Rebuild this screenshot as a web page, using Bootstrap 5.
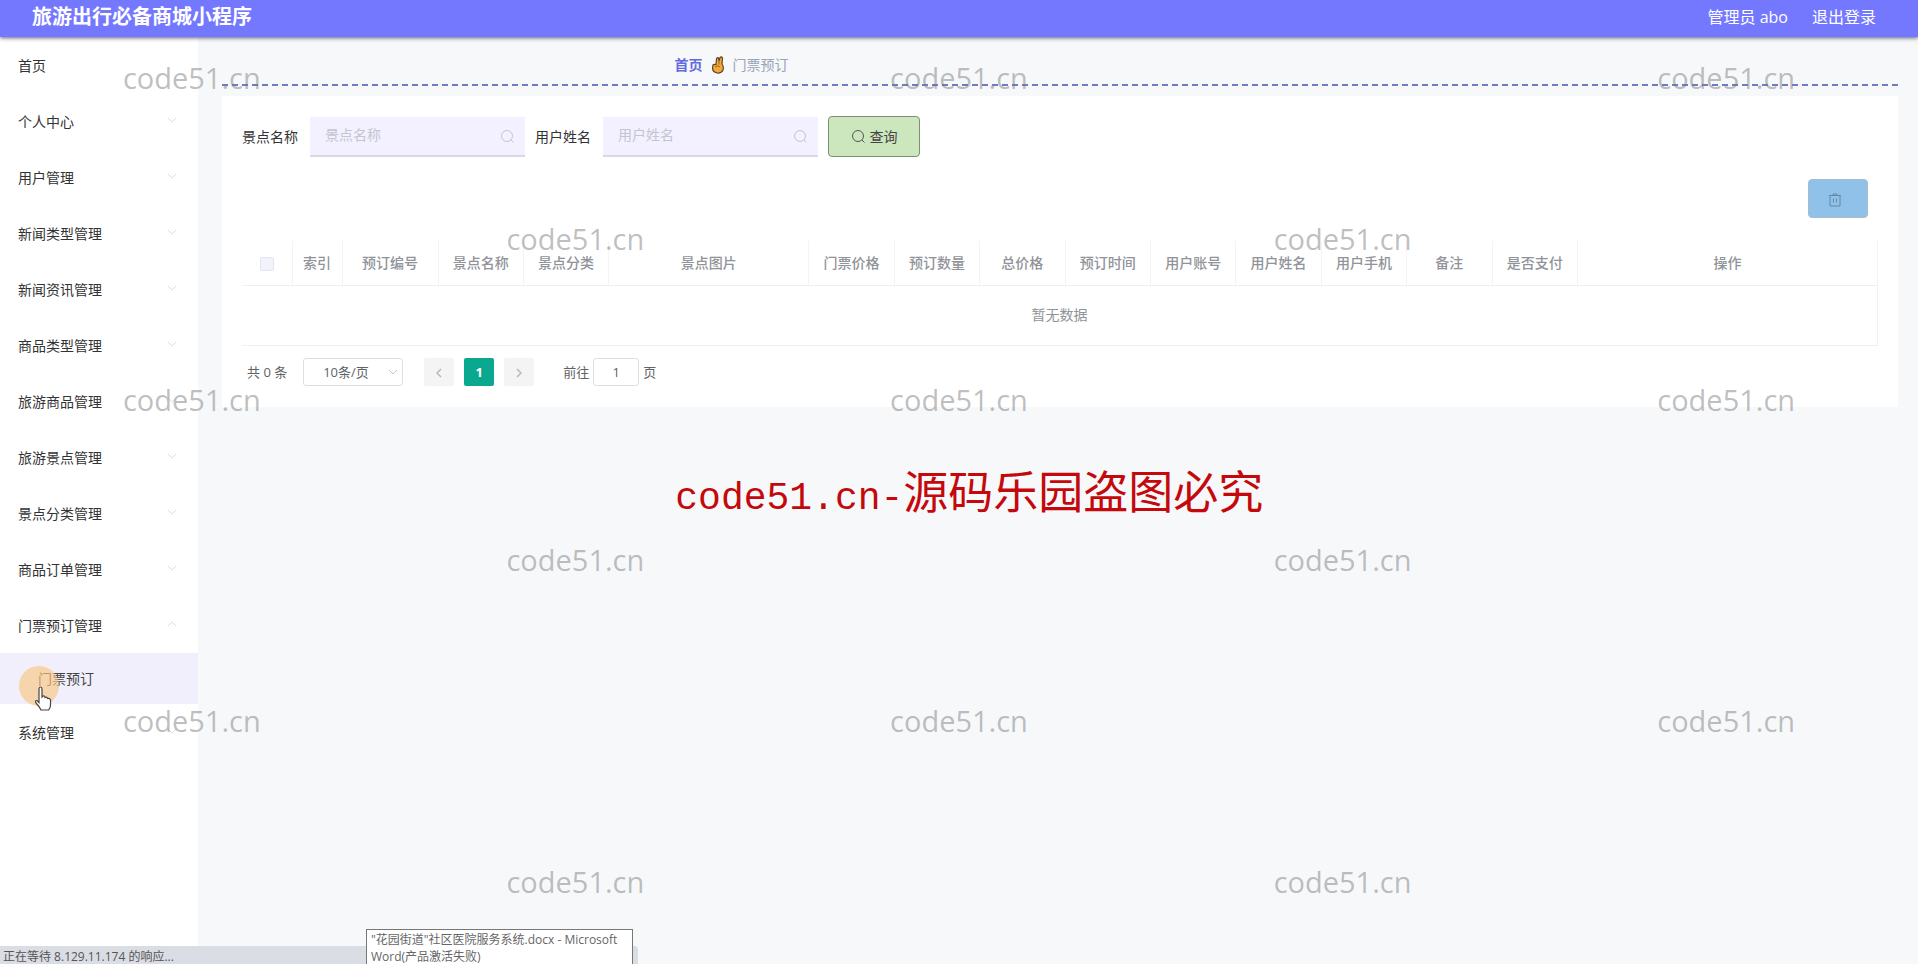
<!DOCTYPE html>
<html lang="zh-CN">
<head>
<meta charset="utf-8">
<meta name="viewport" content="width=device-width, initial-scale=1">
<title>旅游出行必备商城小程序</title>
<link href="https://cdn.jsdelivr.net/npm/bootstrap@5.3.0/dist/css/bootstrap.min.css" rel="stylesheet">
<style>
body{font-family:"Open Sans","Noto Sans CJK SC",sans-serif;font-size:14px;line-height:20px;color:#333;background:#f6f8fa;overflow:hidden}
.shell{min-height:100vh}
.topbar{height:37px;background:#7478ff;box-shadow:0 1px 4px rgba(30,30,60,.7);padding:0 42px 3px 32px;z-index:2;font-size:16px;color:#fff}
.topbar h1{font-size:20px;line-height:28px;font-weight:700}
.topbar a{color:#fff}
.side{width:198px;background:#fff;flex:none}
.side a{color:#333;height:56px;padding:1px 21px 0 18px}
.side a.sub{height:51px;padding-left:38px;background:#f1effb;color:#444}
.side svg{margin-top:-4px}
.content{padding:0 20px 0 24px}
.crumbs{height:49px;padding:7px 0 0 27%;margin-bottom:10px;background:repeating-linear-gradient(90deg,#6f7cc4 0 6px,transparent 6px 10px) left bottom/100% 2px no-repeat;gap:8px;color:#99a3b6}
.crumbs a{color:#6468e0}
.panel{background:#fff;padding:20px}
.search-box{width:215px;margin:0 10px 0 12px}
.search-box input{height:40px;border:0;border-bottom:2px solid #d9d8e4;border-radius:0;background:#f3f1ff;font-size:14px;padding:0 30px 2px 15px}
.search-box input::placeholder{color:#c3c5cf}
.search-box svg{right:10px;top:12px}
.btn-query{width:92px;height:41px;border:1px solid #7c8f74;border-radius:4px;background:#cce6bd;color:#444;font-size:14px;padding:0}
.tools{padding:22px 10px 23px 0}
.btn-del{width:60px;height:39px;border:1px solid #a8bccb;border-radius:4px;background:#8fc1e9;padding:0 6px 0 0}
.btn-del:disabled{opacity:1;background:#8fc1e9;border-color:#a8bccb}
.data{table-layout:fixed;color:#909399;border-right:1px solid #f1f2f4;margin:0}
.data th{height:44px;font-weight:500;text-align:center;vertical-align:middle;padding:0;border-bottom:1px solid #eff0f3;border-right:1px solid #f3f4f6}
.data td{height:60px;text-align:center;vertical-align:middle;padding:0;border-bottom:1px solid #eff0f3}
.data .form-check-input{width:14px;height:14px;margin:0;border:1px solid #e2e6ef;border-radius:2px;background:#f0f3fa;vertical-align:middle}
.w-s{width:50px}.w-no{width:96px}.w-img{width:200px}.w-op{width:300px}
.pager{padding:12px 5px 1px;font-size:13px;color:#606266}
.pager select{width:100px;height:28px;font-size:13px;padding:0 0 0 19px;border:1px solid #dcdfe6;border-radius:3px;color:#606266;background:#fff;appearance:none}
.pages{gap:10px;margin:0 29px 0 5px}
.pager .pg{width:30px;height:28px;border:0;border-radius:2px;background:#f4f4f5;padding:0;color:#b0b4bc;font-size:13px;font-weight:700}
.pager .pg.on{background:#0aa88f;color:#fff}
.pager .go{width:46px;height:28px;border:1px solid #dcdfe6;border-radius:3px;text-align:center;color:#606266;font-size:13px}
.marks{display:grid;grid-template:repeat(6,1fr)/repeat(5,1fr);font-size:29px;line-height:40px;color:rgba(120,120,120,.48);pointer-events:none;z-index:5}
.marks span{display:flex;align-items:center;justify-content:center;margin-top:-4px}
.notice{left:35%;top:464px;color:#c4080c;font-size:45px;line-height:56px;padding-left:4px;pointer-events:none;white-space:nowrap;z-index:6}
.notice span{font-family:"Liberation Mono",monospace;font-size:38px}
.status{left:0;bottom:0;width:638px;height:18px;background:#dadde4;font-size:12px;line-height:22px;padding-left:3px;border-top-right-radius:4px;color:#555;z-index:3}
.tip{left:366px;bottom:0;width:267px;height:35px;background:#fff;border:1px solid #777;border-bottom:0;font-size:12px;line-height:17px;padding:1px 4px;color:#666;z-index:4;white-space:nowrap}
.pointer{left:19px;top:665px;z-index:4;pointer-events:none}
</style>
</head>
<body>
<div class="shell d-flex flex-column position-relative">
<header class="topbar d-flex align-items-center justify-content-between position-relative">
<h1 class="m-0">旅游出行必备商城小程序</h1>
<div class="d-flex gap-4"><span>管理员 abo</span><a href="#" class="text-decoration-none">退出登录</a></div>
</header>
<div class="d-flex flex-grow-1">
<nav class="side" id="side">
<a href="#" class="d-flex align-items-center justify-content-between text-decoration-none">首页</a>
</nav>
<main class="content flex-grow-1">
<div class="crumbs d-flex align-items-center"><a href="#" class="text-decoration-none fw-bold">首页</a>
<svg width="14" height="18" viewBox="0 0 14 18"><path d="M2 9Q3 8 5 8.500L5.500 3Q6 1 7.500 2L8 5 9 1.500Q10.500 0 11.500 2L11 8Q13 11 12 14 10.500 17.500 6 17 1.500 16 1.500 12Z" fill="#f5a83a" stroke="#5f4524" stroke-width="1.200"/><path d="M4 11Q7 8.500 9 11M8 5v3.500" fill="none" stroke="#9a651c"/></svg>
<span>门票预订</span></div>
<section class="panel">
<form class="d-flex align-items-center">
<label for="spot">景点名称</label>
<div class="search-box position-relative"><input id="spot" class="form-control" placeholder="景点名称"><svg class="position-absolute" width="15" height="15" viewBox="0 0 15 15" fill="none" stroke="#c3c5cf"><circle cx="7" cy="7" r="5.500"/><path d="m11 11 2.500 2.500"/></svg></div>
<label for="user">用户姓名</label>
<div class="search-box position-relative"><input id="user" class="form-control" placeholder="用户姓名"><svg class="position-absolute" width="15" height="15" viewBox="0 0 15 15" fill="none" stroke="#c3c5cf"><circle cx="7" cy="7" r="5.500"/><path d="m11 11 2.500 2.500"/></svg></div>
<button type="button" class="btn btn-query d-flex align-items-center justify-content-center gap-1"><svg width="15" height="15" viewBox="0 0 15 15" fill="none" stroke="#555"><circle cx="7" cy="7" r="5.500"/><path d="m11 11 2.500 2.500"/></svg>查询</button>
</form>
<div class="tools d-flex justify-content-end"><button type="button" class="btn btn-del" disabled aria-label="删除"><svg width="14" height="14" viewBox="0 0 14 14" fill="none" stroke="#6488a6"><path d="M1 2.500h12M5 2.500V1h4v1.500M2 2.500v10.500h10V2.500M5.500 5.500v4M8.500 5.500v4"/></svg></button></div>
<table class="data w-100">
<colgroup><col class="w-s"><col class="w-s"><col class="w-no"><col><col><col class="w-img"><col><col><col><col><col><col><col><col><col><col class="w-op"></colgroup>
<thead><tr><th><input type="checkbox" class="form-check-input" aria-label="全选"></th><th>索引</th><th>预订编号</th><th>景点名称</th><th>景点分类</th><th>景点图片</th><th>门票价格</th><th>预订数量</th><th>总价格</th><th>预订时间</th><th>用户账号</th><th>用户姓名</th><th>用户手机</th><th>备注</th><th>是否支付</th><th>操作</th></tr></thead>
<tbody><tr><td colspan="16">暂无数据</td></tr></tbody>
</table>
<div class="pager d-flex align-items-center">
<span>共 0 条</span>
<div class="position-relative ms-3 me-3"><select aria-label="每页条数"><option>10条/页</option></select><svg class="position-absolute top-50 end-0 translate-middle" width="10" height="6" viewBox="0 0 10 6" fill="none" stroke="#c0c4cc"><path d="m1 1 4 4 4-4"/></svg></div>
<div class="pages d-flex"><button type="button" class="pg" aria-label="上一页"><svg width="6" height="10" viewBox="0 0 6 10" fill="none" stroke="#b4b8c0" stroke-width="1.500"><path d="M5 1 1 5l4 4"/></svg></button><button type="button" class="pg on">1</button><button type="button" class="pg" aria-label="下一页"><svg width="6" height="10" viewBox="0 0 6 10" fill="none" stroke="#b4b8c0" stroke-width="1.500"><path d="m1 1 4 4-4 4"/></svg></button></div>
<label for="go" class="me-1">前往</label><input id="go" class="go" value="1"><span class="ms-1">页</span>
</div>
</section>
</main>
</div>
<div class="marks position-absolute top-0 start-0 w-100 h-100" id="marks"></div>
<div class="notice position-absolute"><span>code51.cn-</span>源码乐园盗图必究</div>
<div class="status position-absolute">正在等待 8.129.11.174 的响应...</div>
<div class="tip position-absolute">"花园街道"社区医院服务系统.docx - Microsoft<br>Word(产品激活失败)</div>
<svg class="pointer position-absolute" width="44" height="50" viewBox="0 0 44 50"><circle cx="20" cy="21" r="20" fill="#fbc681" fill-opacity=".65"/><path d="M20 24q0-2 1.500-2T23 24v8l1-1q2-.5 2 1.500 2-1 2.500 1 2.500-.8 3 1.500v5q0 3-2 5H22q-2-4-5-7-1.500-2.500 1-2.500l2 2z" fill="#fff" stroke="#444" stroke-width="1.200"/></svg>
</div>
<script src="https://cdn.jsdelivr.net/npm/bootstrap@5.3.0/dist/js/bootstrap.bundle.min.js"></script>
<script>
const side=document.getElementById('side');
['个人中心','用户管理','新闻类型管理','新闻资讯管理','商品类型管理','旅游商品管理','旅游景点管理','景点分类管理','商品订单管理','门票预订管理','系统管理'].forEach(t=>{
  const open=t==='门票预订管理';
  const d=open?'m1 5 4-4 4 4':'m1 1 4 4 4-4';
  side.insertAdjacentHTML('beforeend',`<a href="#" class="d-flex align-items-center justify-content-between text-decoration-none">${t}<svg width="10" height="6" viewBox="0 0 10 6" fill="none" stroke="#dcdee3"><path d="${d}"/></svg></a>`+(open?'<a href="#" class="sub d-flex align-items-center text-decoration-none">门票预订</a>':''));
});
const marks=document.getElementById('marks');
for(let r=0;r<6;r++)for(let c=0;c<5;c++)marks.insertAdjacentHTML('beforeend',(r+c)%2?'<i></i>':'<span>code51.cn</span>');
</script>
</body>
</html>
